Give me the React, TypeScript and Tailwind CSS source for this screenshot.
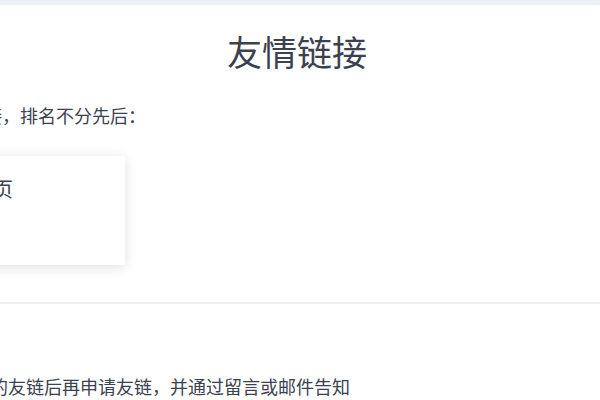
const font = "font-['Liberation_Sans','Noto_Sans_CJK_SC',sans-serif]";

export default function App() {
  return (
    <div className={`min-h-[400px] bg-white overflow-hidden ${font}`}>
      <div className="h-[5px] bg-[#edf0f4]" />
      <div className="ml-[-160px] w-[914px]">
        <h1 className="mt-[31px] text-center text-[35px] leading-none font-normal text-[#3b414e]">
          友情链接
        </h1>
        <p className="mt-[37px] text-[18px] leading-none text-[#3b414e]">
          以下是本站友情链接，排名不分先后：
        </p>
        <div className="mt-[30px] flex">
          <a className="w-[285px] h-[109px] bg-white pl-[53px] pt-[24px] shadow-[0_2px_12px_rgba(0,0,0,0.12)]">
            <div className="text-[20px] leading-none text-[#3b414e]">
              我的博客主页
            </div>
          </a>
        </div>
        <div className="mt-[37px] h-[2px] bg-[#eeeeee]" />
        <p className="mt-[75px] pl-[6px] text-[18px] leading-none text-[#3b414e]">
          请先添加本站为您的友链后再申请友链，并通过留言或邮件告知
        </p>
      </div>
    </div>
  );
}
